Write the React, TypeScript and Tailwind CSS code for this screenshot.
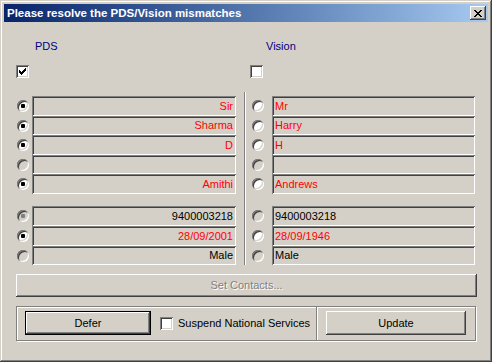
import React from 'react';

const sunken =
  'shadow-[inset_1px_1px_#808080,inset_-1px_-1px_#ffffff,inset_2px_2px_#404040,inset_-2px_-2px_#d4d0c8]';
const raised =
  'shadow-[inset_-1px_-1px_#404040,inset_1px_1px_#ffffff,inset_-2px_-2px_#808080,inset_2px_2px_#d4d0c8]';

type Row = { pds: string; vis: string; pick?: 'pds' | 'vis'; red: boolean; disabled?: boolean; h: string };

const group1: Row[] = [
  { pds: 'Sir', vis: 'Mr', pick: 'pds', red: true, h: 'h-5' },
  { pds: 'Sharma', vis: 'Harry', pick: 'pds', red: true, h: 'h-[19px]' },
  { pds: 'D', vis: 'H', pick: 'pds', red: true, h: 'h-5' },
  { pds: '', vis: '', red: true, disabled: true, h: 'h-[19px]' },
  { pds: 'Amithi', vis: 'Andrews', pick: 'pds', red: true, h: 'h-5' },
];

const group2: Row[] = [
  { pds: '9400003218', vis: '9400003218', pick: 'pds', red: false, disabled: true, h: 'h-5' },
  { pds: '28/09/2001', vis: '28/09/1946', pick: 'pds', red: true, h: 'h-5' },
  { pds: 'Male', vis: 'Male', red: false, disabled: true, h: 'h-[19px]' },
];

const Radio = ({ checked, disabled }: { checked?: boolean; disabled?: boolean }) => (
  <span
    className={`flex h-3 w-3 items-center justify-center rounded-full ${sunken} ${
      disabled ? 'bg-[#d4d0c8]' : 'bg-white'
    }`}
  >
    {checked && <span className={`h-1 w-1 rounded-[1px] ${disabled ? 'bg-[#808080]' : 'bg-black'}`} />}
  </span>
);

const Checkbox = ({ checked }: { checked?: boolean }) => (
  <span className={`flex h-[13px] w-[13px] items-center justify-center bg-white ${sunken}`}>
    {checked && (
      <svg width="7" height="7" viewBox="0 0 7 7" shapeRendering="crispEdges">
        <path
          d="M6 0h1v1h-1z M5 1h2v1h-2z M0 2h1v1h-1z M4 2h3v1h-3z M0 3h2v1h-2z M3 3h3v1h-3z M0 4h5v1h-5z M1 5h3v1h-3z M2 6h1v1h-1z"
          fill="#000"
        />
      </svg>
    )}
  </span>
);

const Field = ({ text, red, right }: { text: string; red: boolean; right?: boolean }) => (
  <div
    className={`flex h-full flex-1 items-center bg-[#d4d0c8] ${sunken} ${
      right ? 'justify-end pr-[3px]' : 'pl-[3px]'
    } ${red ? 'text-[#ff0000]' : 'text-black'}`}
  >
    <span className="leading-[13px]">{text}</span>
  </div>
);

const Side = ({ rows, side }: { rows: Row[]; side: 'pds' | 'vis' }) => (
  <div className="flex flex-col">
    {rows.map((r, i) => (
      <div key={i} className={`flex items-center ${r.h}`}>
        {side === 'pds' ? (
          <div className="w-4 pl-px">
            <Radio checked={r.pick === 'pds'} disabled={r.disabled} />
          </div>
        ) : (
          <div className="w-[22px] pl-[2px]">
            <Radio checked={r.pick === 'vis'} disabled={r.disabled} />
          </div>
        )}
        <Field text={side === 'pds' ? r.pds : r.vis} red={r.red} right={side === 'pds'} />
      </div>
    ))}
  </div>
);

const App = () => {
  return (
    <div className="h-[362px] w-[492px] bg-[#d4d0c8] font-['Liberation_Sans',Arial,sans-serif] text-[11px] text-black">
      <div className="flex h-full w-full flex-col p-1 shadow-[inset_-1px_-1px_#404040,inset_1px_1px_#d4d0c8,inset_-2px_-2px_#808080,inset_2px_2px_#ffffff]">
        {/* title bar */}
        <div className="flex h-[18px] items-center justify-between bg-linear-to-r from-[#0a246a] to-[#a6caf0] pl-[3px] pr-[2px]">
          <span className="text-[11.5px] font-bold leading-[14px] text-white">
            Please resolve the PDS/Vision mismatches
          </span>
          <button className={`flex h-[14px] w-4 items-center justify-center bg-[#d4d0c8] ${raised}`}>
            <svg width="8" height="7" viewBox="0 0 8 7" shapeRendering="crispEdges">
              <path
                d="M0 0h2v1h-2z M6 0h2v1h-2z M1 1h2v1h-2z M5 1h2v1h-2z M2 2h4v1h-4z M3 3h2v1h-2z M2 4h4v1h-4z M1 5h2v1h-2z M5 5h2v1h-2z M0 6h2v1h-2z M6 6h2v1h-2z"
                fill="#000"
              />
            </svg>
          </button>
        </div>

        {/* client area */}
        <div className="flex flex-1 flex-col pl-3 pr-[11px]">
          <div className="flex pt-[18px]">
            <div className="flex w-[220px] flex-col">
              <span className="ml-[19px] leading-[13px] text-[#000080]">PDS</span>
              <div className="mt-3">
                <Checkbox checked />
              </div>
            </div>
            <div className="ml-[14px] flex flex-col">
              <span className="ml-4 leading-[13px] text-[#000080]">Vision</span>
              <div className="mt-3">
                <Checkbox />
              </div>
            </div>
          </div>

          <div className="mt-[14px] flex">
            <div className="flex w-[220px] flex-col gap-3 pt-1">
              <Side rows={group1} side="pds" />
              <Side rows={group2} side="pds" />
            </div>
            <div className="ml-2 w-[2px] border-l border-r border-l-[#808080] border-r-white" />
            <div className="ml-1 flex w-[225px] flex-col gap-3 pt-1">
              <Side rows={group1} side="vis" />
              <Side rows={group2} side="vis" />
            </div>
          </div>

          <button
            className={`mt-[9px] flex h-[23px] w-[461px] items-center justify-center bg-[#d4d0c8] text-[#808080] [text-shadow:1px_1px_0_#ffffff] ${raised}`}
          >
            Set Contacts...
          </button>

          <div className="mt-[9px] flex h-[35px] w-[460px] border border-[#808080] shadow-[inset_1px_1px_#ffffff,1px_1px_#ffffff]">
            <div className="flex w-[299px] items-center pb-px pl-2">
              <div className="border border-black">
                <button className={`flex h-[22px] w-[124px] items-center justify-center bg-[#d4d0c8] ${raised}`}>
                  Defer
                </button>
              </div>
              <div className="ml-[9px]">
                <Checkbox />
              </div>
              <span className="ml-[5px] leading-[13px]">Suspend National Services</span>
            </div>
            <div className="w-[2px] border-l border-r border-l-[#808080] border-r-white" />
            <div className="flex items-center pb-px pl-2">
              <button className={`flex h-6 w-[140px] items-center justify-center bg-[#d4d0c8] ${raised}`}>
                Update
              </button>
            </div>
          </div>
        </div>
      </div>
    </div>
  );
};

export default App;
